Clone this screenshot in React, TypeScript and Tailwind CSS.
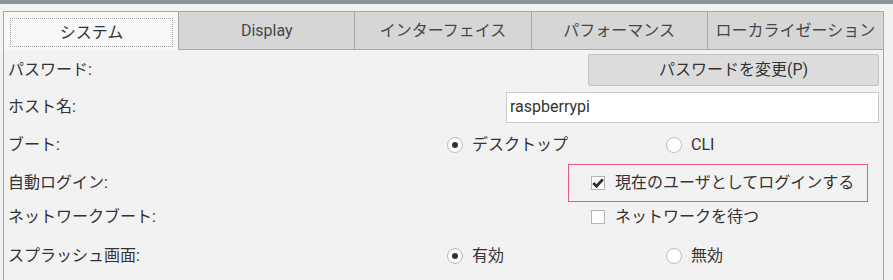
import React from 'react';

const font = { fontFamily: 'Roboto, "Noto Sans CJK JP", sans-serif' };

const tabs = ['システム', 'Display', 'インターフェイス', 'パフォーマンス', 'ローカライゼーション'];

const Radio = ({ checked, label }: { checked?: boolean; label: string }) => (
  <div className="flex items-center gap-[9px]">
    <span className="w-4 h-4 rounded-full border border-[#bdbdbd] bg-white flex items-center justify-center shrink-0">
      {checked && <span className="w-[6px] h-[6px] rounded-full bg-[#333]" />}
    </span>
    <span>{label}</span>
  </div>
);

const Check = ({ checked, label }: { checked?: boolean; label: string }) => (
  <div className="flex items-center gap-[10px]">
    <span className="w-[14px] h-[14px] border border-[#b3b3b3] bg-white flex items-center justify-center shrink-0">
      {checked && (
        <svg width="12" height="12" viewBox="0 0 12 12">
          <path d="M1.3 6 L4.5 9.3 L10.8 2.4" fill="none" stroke="#2e2e2e" strokeWidth="2.8" />
        </svg>
      )}
    </span>
    <span>{label}</span>
  </div>
);

const Row = ({ label, className, children }: { label: string; className: string; children: React.ReactNode }) => (
  <div className={`flex items-center justify-between ${className}`}>
    <span>{label}</span>
    {children}
  </div>
);

export default function App() {
  return (
    <div className="w-[893px] h-[280px] bg-[#f2f2f2] text-[16px] text-[#333] overflow-hidden" style={font}>
      <div className="h-[4px] bg-[#8a9599]" />
      <div className="mt-[7px] ml-[3px] w-[881px] grid grid-cols-5 h-[39px]">
        {tabs.map((t, i) =>
          i === 0 ? (
            <div key={t} className="flex border-l border-t border-r border-[#a8a8a8] bg-[#f7f7f7] pt-[6px] pl-[6px] pr-[5px] pb-[3px]">
              <div className="flex-1 flex items-center justify-center border border-dotted border-[#a0a0a0]">{t}</div>
            </div>
          ) : (
            <div key={t} className="flex items-center justify-center border-t border-r border-b border-[#a8a8a8] bg-[#d6d6d6] text-[#474747]">
              {t}
            </div>
          )
        )}
      </div>
      <div className="ml-[3px] w-[881px] h-[240px] border-l border-r border-[#a8a8a8] pl-[4px] pr-[4px] pt-[4px]">
        <Row label="パスワード:" className="h-[32px]">
          <button type="button" className="w-[291px] h-[32px] bg-[#dcdcdc] border border-[#c2c2c2] rounded-[2px] flex items-center justify-center">
            パスワードを変更(P)
          </button>
        </Row>
        <Row label="ホスト名:" className="h-[30px] mt-[6px]">
          <div className="w-[373px] h-[31px] bg-white border border-[#cacaca] flex items-center pl-[3px]">raspberrypi</div>
        </Row>
        <Row label="ブート:" className="h-[38px] mt-[4px]">
          <div className="w-[432px] grid grid-cols-[219px_1fr]">
            <Radio checked label="デスクトップ" />
            <Radio label="CLI" />
          </div>
        </Row>
        <Row label="自動ログイン:" className="h-[38px]">
          <div className="w-[300px] h-[38px] mr-[11px] border border-[#e8588a] flex items-center pl-[22px]">
            <Check checked label="現在のユーザとしてログインする" />
          </div>
        </Row>
        <Row label="ネットワークブート:" className="h-[30px]">
          <div className="w-[300px] mr-[11px] flex items-center pl-[23px]">
            <Check label="ネットワークを待つ" />
          </div>
        </Row>
        <Row label="スプラッシュ画面:" className="h-[40px] mt-[4px]">
          <div className="w-[432px] grid grid-cols-[219px_1fr]">
            <Radio checked label="有効" />
            <Radio label="無効" />
          </div>
        </Row>
      </div>
    </div>
  );
}
